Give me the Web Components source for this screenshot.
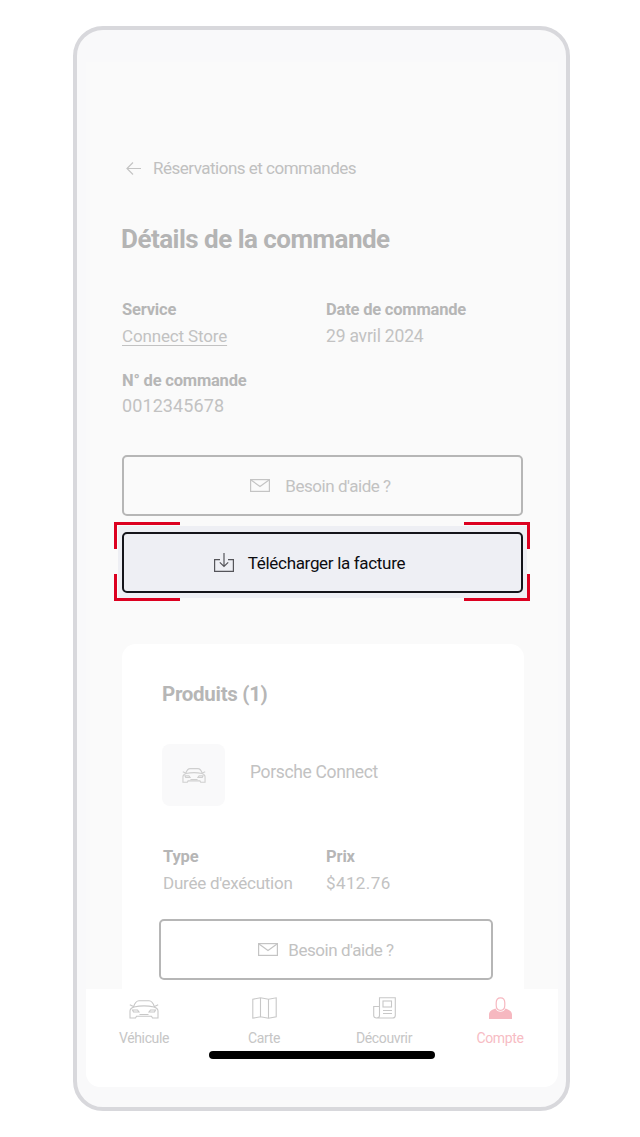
<!DOCTYPE html>
<html lang="fr">
<head>
<meta charset="utf-8">
<title>Détails de la commande</title>
<style>
  html, body { margin: 0; background: #fff; }
  body { font-family: Roboto, "Liberation Sans", sans-serif; }
</style>
</head>
<body>
<phone-frame>
  <back-link>Réservations et commandes</back-link>
  <page-title>Détails de la commande</page-title>
  <order-facts>
    <fact-item label="Service" link>Connect Store</fact-item>
    <fact-item label="Date de commande" style="--ls:-.2px">29 avril 2024</fact-item>
    <fact-item label="N° de commande" style="--gap:2px;--fs:18px;--ls:.1px">0012345678</fact-item>
  </order-facts>
  <action-button icon="mail" style="margin-top:38px;--gap:15px;padding-right:4px">Besoin d'aide ?</action-button>
  <focus-ring style="margin-top:16px"><action-button icon="download" active>Télécharger la facture</action-button></focus-ring>
  <product-card slot="card"></product-card>
  <tab-bar slot="nav">
    <tab-item icon="car">Véhicule</tab-item>
    <tab-item icon="map">Carte</tab-item>
    <tab-item icon="news">Découvrir</tab-item>
    <tab-item icon="person" active>Compte</tab-item>
  </tab-bar>
</phone-frame>

<script>
const ICONS = {
  mail: `<svg width="20" height="13" viewBox="0 0 20 13" fill="none" stroke="currentColor" stroke-width="1.2"><rect x=".6" y=".6" width="18.800" height="11.800"/><path d="M1 1l9 6.500L19 1"/></svg>`,
  download: `<svg width="20" height="19" viewBox="0 0 20 19" fill="none" stroke="currentColor" stroke-width="1.2"><path d="M6 6.600H.6v11.800h18.800V6.600H14"/><path d="M10 0v13.500M5.800 9.300l4.200 4.200 4.200-4.200"/></svg>`,
  car: `<svg width="30" height="19" viewBox="0 0 30 19" fill="none" stroke="currentColor" stroke-width="1.1"><path d="M4.500 7C6 2.300 7.500 .8 10 .8h10c2.500 0 4 1.500 5.500 6.200"/><path d="M.8 4.800l4.200 2M29.200 4.800L25 6.800"/><path d="M5 7c6-1.300 14-1.300 20 0 2.500.8 4 2 4 4v7h-5.500l-1-1.700h-15l-1 1.700H1v-7c0-2 1.500-3.200 4-4z"/><path d="M3.500 10h5l1.500 2H4.500zM26.500 10h-5L20 12h5.500zM10.500 14.500h9"/></svg>`,
  map: `<svg width="25" height="22" viewBox="0 0 25 22" fill="none" stroke="currentColor" stroke-width="1.1"><path d="M.8 2.200L8.500.8l8 1.400 7.700-1.400v19l-7.700 1.400-8-1.400-7.700 1.400zM8.500.8v19M16.500 2.200v19"/></svg>`,
  news: `<svg width="23" height="22" viewBox="0 0 23 22" fill="none" stroke="currentColor" stroke-width="1.1"><path d="M3.500 21h16c1.500 0 2.800-1 2.800-2.500V.8H6.500v17.700c0 1.500-1.300 2.500-3 2.500S.7 20 .7 18.500v-9h5.800"/><rect x="10" y="4" width="8.500" height="6"/><path d="M10 13.500h9M10 16.500h9"/></svg>`,
  person: `<svg width="23" height="22" viewBox="0 0 23 22"><path fill="none" stroke="currentColor" stroke-width="1.2" d="M11.500 .8c2.700 0 4.300 2 4.300 5v2.500c0 2.900-1.700 5-4.300 5s-4.300-2.100-4.300-5V5.800c0-3 1.600-5 4.300-5z"/><path fill="currentColor" d="M6.500 11.500c1 2.200 2.800 3.300 5 3.300s4-1.100 5-3.300c3.500 1 6.500 3 6.500 6V22H0v-4.500c0-3 3-5 6.500-6z"/></svg>`
}

function makeElement(name, html) {
  const tpl = document.createElement('template')
  tpl.innerHTML = html
  customElements.define(name, class extends HTMLElement {
    constructor() {
      super()
      this.attachShadow({mode: 'open'}).appendChild(tpl.content.cloneNode(true))
      const holder = this.shadowRoot.querySelector('.icon')
      if (holder) holder.innerHTML = ICONS[this.getAttribute('icon')] || ''
      const label = this.shadowRoot.querySelector('.label')
      if (label) label.textContent = this.getAttribute('label') || ''
    }
  })
}

makeElement('phone-frame', `
  <style>
    :host {
      display: flex;
      flex-direction: column;
      box-sizing: border-box;
      width: 497px;
      height: 1085px;
      margin: 26px 0 26px 73px;
      padding: 32px 8px 20px 9px;
      border: 4px solid #d8d8dc;
      border-radius: 30px;
      background: #f9f9fa;
      position: relative;
    }
    .screen {
      flex: 1;
      min-height: 0;
      overflow: hidden;
      background: #fafafa;
      padding: 0 35px 0 36px;
    }
    .bar { position: absolute; left: 132px; top: 1021px; width: 226px; height: 8px; border-radius: 4px; background: #000; }
  </style>
  <div class="screen"><slot></slot><slot name="card"></slot></div>
  <slot name="nav"></slot>
  <div class="bar"></div>`)

makeElement('back-link', `
  <style>
    :host { display: flex; align-items: center; gap: 12px; margin-top: 94px; padding-left: 4px; height: 24px; color: #c0c0c0; font-size: 17px; letter-spacing: -.5px; white-space: nowrap; }
    svg { display: block; }
  </style>
  <svg width="15" height="13" viewBox="0 0 15 13" fill="none" stroke="#c4c4c4" stroke-width="1.2"><path d="M15 6.500H1M7 .5L1 6.500l6 6"/></svg>
  <slot></slot>`)

makeElement('page-title', `
  <style>
    :host { display: block; margin: 43px 0 0 -1px; height: 32px; line-height: 32px; font-size: 26px; font-weight: 700; color: #b4b4b4; letter-spacing: -.52px; white-space: nowrap; }
  </style>
  <slot></slot>`)

makeElement('order-facts', `
  <style>
    :host { display: grid; grid-template-columns: 204px 1fr; row-gap: 21px; margin-top: 43px; }
  </style>
  <slot></slot>`)

makeElement('fact-item', `
  <style>
    :host { display: flex; flex-direction: column; gap: var(--gap, 4px); font-size: var(--fs, 17.500px); color: #c2c2c2; line-height: 23px; white-space: nowrap; letter-spacing: var(--ls, 0); }
    .label { font-size: 16.500px; font-weight: 700; color: #b6b6b6; letter-spacing: -.2px; }
    .value { display: block; }
    :host([link]) .value { text-decoration: underline; text-underline-offset: 3px; font-size: 17px; letter-spacing: -.15px; }
  </style>
  <span class="label"></span>
  <span class="value"><slot></slot></span>`)

makeElement('action-button', `
  <style>
    :host {
      display: flex; align-items: center; justify-content: center; gap: var(--gap, 14px);
      box-sizing: border-box; height: 61px;
      border: 2px solid #b6b6b6; border-radius: 5px;
      color: #c2c2c2; font-size: 17px; letter-spacing: -.45px; white-space: nowrap;
    }
    :host([active]) { border-color: #14141a; background: #eeeff4; color: #0c0c10; padding-right: 26px; letter-spacing: -.32px; }
    .icon { display: flex; color: #c4c4c4; }
    :host([active]) .icon { color: #55555a; }
  </style>
  <span class="icon"></span>
  <slot></slot>`)

makeElement('focus-ring', `
  <style>
    :host { display: block; position: relative; }
    .glow { position: absolute; inset: -6px -4px -5px -4px; background: #eeeff4; }
    .slot-wrap { position: relative; }
    .c { position: absolute; width: 63px; height: 24px; border: 0 solid #dc0020; }
    .tl { left: -8px; top: -10px; border-width: 3px 0 0 3px; }
    .tr { right: -7px; top: -10px; border-width: 3px 3px 0 0; }
    .bl { left: -8px; bottom: -8px; border-width: 0 0 3px 3px; }
    .br { right: -7px; bottom: -8px; border-width: 0 3px 3px 0; }
  </style>
  <div class="glow"></div>
  <div class="slot-wrap"><slot></slot></div>
  <i class="c tl"></i><i class="c tr"></i><i class="c bl"></i><i class="c br"></i>`)

makeElement('product-card', `
  <style>
    :host { display: block; margin-top: 51px; padding: 36px 31px 40px 37px; width: 402px; box-sizing: border-box; background: #fff; border-radius: 14px; color: #c2c2c2; }
    h2 { margin: 0 0 0 3px; font-size: 20.500px; line-height: 28px; font-weight: 700; color: #b6b6b6; letter-spacing: -.3px; }
    .row { display: flex; align-items: center; gap: 25px; margin: 36px 0 0 3px; font-size: 17.500px; letter-spacing: -.35px; }
    .row span:last-child { padding-bottom: 6px; }
    .thumb { display: flex; align-items: center; justify-content: center; width: 63px; height: 62px; background: #f9f9fa; border-radius: 8px; color: #cfcfcf; }
    .thumb svg { width: 24px; height: 15px; stroke-width: 1.4; }
    .facts { display: grid; grid-template-columns: 163px 1fr; margin: 39px 0 0 4px; font-size: 17px; line-height: 23px; row-gap: 4px; white-space: nowrap; letter-spacing: -.25px; }
    .facts .price { letter-spacing: .4px; }
    b { font-size: 16.500px; color: #b6b6b6; letter-spacing: -.15px; }
    action-button { margin-top: 24px; }
  </style>
  <h2>Produits (1)</h2>
  <div class="row"><span class="thumb">${ICONS.car}</span><span>Porsche Connect</span></div>
  <div class="facts"><b>Type</b><b>Prix</b><span>Durée d'exécution</span><span class="price">$412.76</span></div>
  <action-button icon="mail" style="--gap:10px">Besoin d'aide ?</action-button>`)

makeElement('tab-bar', `
  <style>
    :host { display: grid; grid-template-columns: 116px 116px 116px 108px; column-gap: 4px; height: 98px; box-sizing: border-box; padding-top: 8px; background: #fff; border-radius: 0 0 14px 14px; }
  </style>
  <slot></slot>`)

makeElement('tab-item', `
  <style>
    :host { display: flex; flex-direction: column; align-items: center; color: #c6c6c6; font-size: 14px; letter-spacing: -.35px; }
    :host([active]) { color: #f7bcc4; }
    .icon { display: flex; align-items: flex-end; height: 22px; margin-bottom: 10px; color: #c8c8c8; }
    :host([active]) .icon { color: #f6b8c0; }
    span.t { line-height: 18px; }
  </style>
  <span class="icon"></span>
  <span class="t"><slot></slot></span>`)
</script>
</body>
</html>
